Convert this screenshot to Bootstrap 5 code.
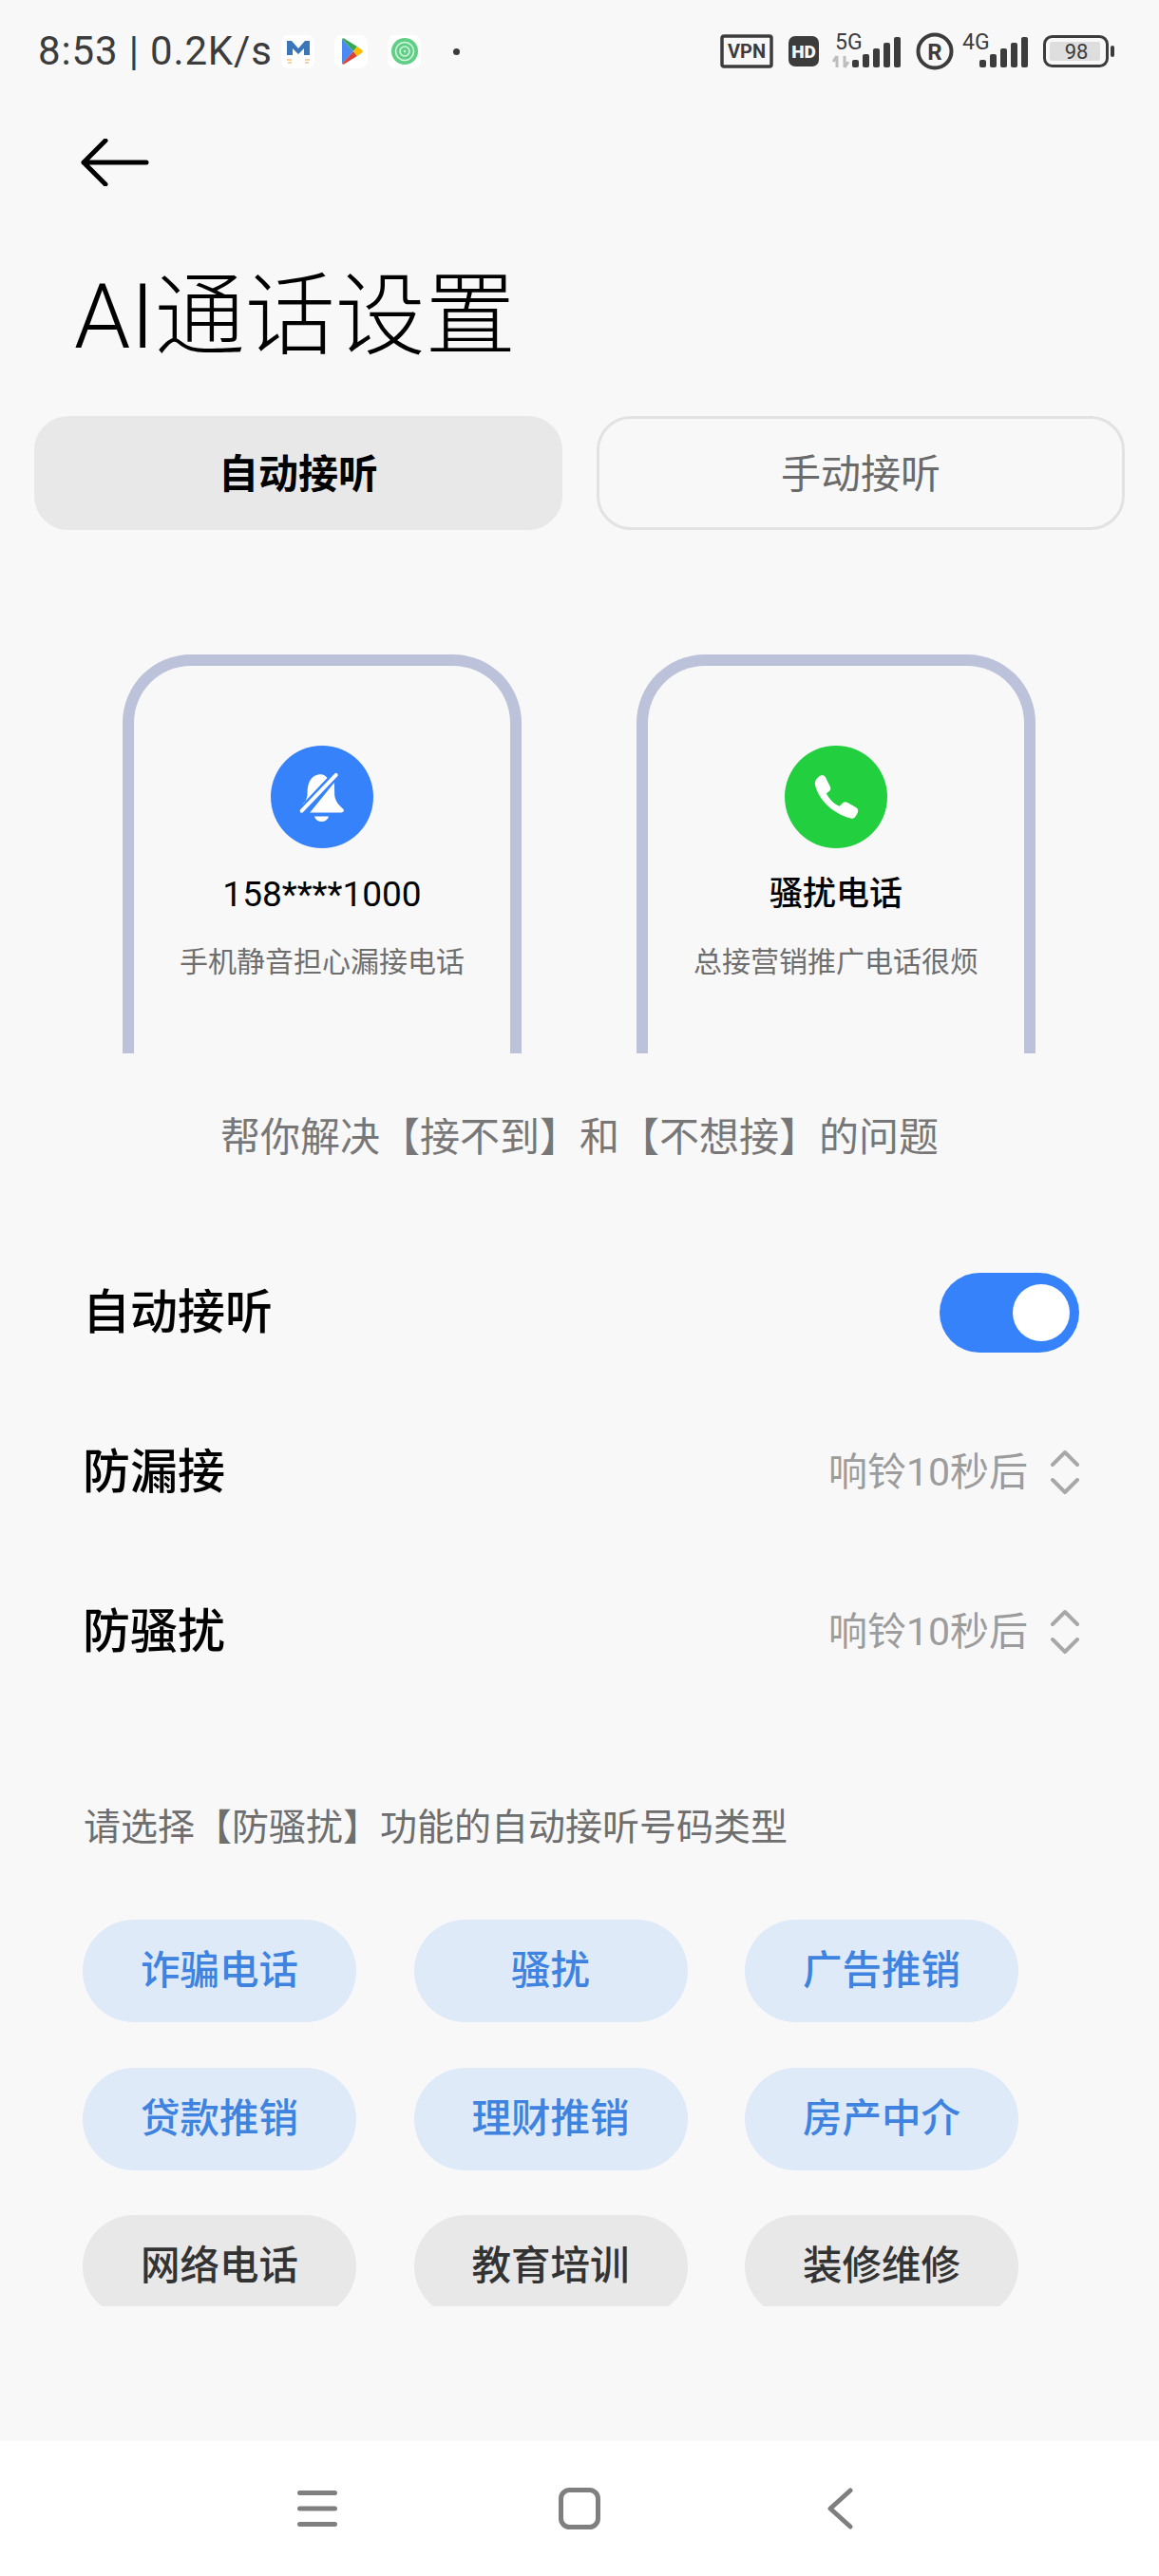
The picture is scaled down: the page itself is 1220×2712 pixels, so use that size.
<!DOCTYPE html>
<html lang="zh-CN">
<head>
  <meta charset="utf-8">
  <title>AI通话设置</title>
  <link href="https://cdn.jsdelivr.net/npm/bootstrap@5.3.0/dist/css/bootstrap.min.css" rel="stylesheet">
  <style>
    body {
      background: #f8f8f8;
      font-family: Roboto, "Noto Sans CJK SC", sans-serif;
      color: #000;
      height: 2712px;
      overflow: hidden;
    }
    .phone-screen { height: 2712px; }

    .status-row { height: 108px; padding: 0 47px 0 40px; color: #3c3c3c; }
    .status-clock { font-size: 42px; line-height: 1; width: 256px; white-space: nowrap; letter-spacing: .85px; }
    .app-tile { width: 35px; height: 35px; background: #fff; border-radius: 8px; margin-right: 21px; }
    .status-dot { width: 7px; height: 7px; border-radius: 50%; background: #3c3c3c; margin-left: 13px; }

    .back-row { padding: 38px 0 0 85px; height: 70px; }
    .page-title { font-size: 95px; font-weight: 300; line-height: 1; margin: 108px 0 0 78px; }

    .mode-tabs { margin: 57px 36px 0; gap: 36px; }
    .mode-tab {
      flex: 1 1 0; height: 120px; font-size: 42px; line-height: 1; border-radius: 36px; padding-top: 10px;
      border: 3px solid #e2e2e2; background: transparent; color: #6a6a6a;
    }
    .mode-tab.is-on { background: #e8e8e8; border-color: #e8e8e8; color: #000; font-weight: 700; }

    .phones { margin: 131px 0 0 129px; gap: 121px; }
    .phone-frame {
      width: 420px; height: 420px; border: 12px solid #bcc2da; border-bottom: 0;
      border-radius: 72px 72px 0 0; padding-top: 84px;
    }
    .call-icon { width: 108px; height: 108px; border-radius: 50%; }
    .call-name { font-size: 37px; line-height: 1; margin-top: 30px; height: 37px; }
    .call-name.is-cjk { font-size: 35px; font-weight: 500; line-height: 37px; }
    .call-hint { font-size: 30px; line-height: 1; margin-top: 38px; color: #6e6e6e; }

    .solve-note { font-size: 42px; line-height: 1; color: #777; margin-top: 68px; text-align: center; }

    .setting-rows { margin-top: 79px; padding: 0 84px 0 87px; }
    .setting-row { height: 168px; }
    .setting-label { font-size: 50px; line-height: 1; font-weight: 500; }
    .setting-value { font-size: 41px; line-height: 1; color: #9c9c9c; margin-right: 24px; }

    .form-switch .ai-switch {
      width: 147px; height: 84px; margin: 0; float: none; border: 0; border-radius: 42px;
      background-color: #3682fb; background-size: auto 80px; background-position: right 2px center;
    }
    .ai-switch:focus { box-shadow: none; }

    .type-note { font-size: 39px; line-height: 1; color: #6e6e6e; margin: 103px 0 0 88px; }
    .type-clip { height: 407px; overflow: hidden; margin: 77px 0 0 87px; }
    .type-grid { display: grid; grid-template-columns: repeat(3, 288px); column-gap: 60.5px; row-gap: 47.5px; }
    .type-chip {
      height: 108px; border-radius: 54px; font-size: 41.5px; line-height: 1; font-weight: 500;
      background: #e8e8e8; color: #333;
    }
    .type-chip.is-on { background: #deeaf8; color: #3e83e0; }

    .nav-bar { height: 142px; background: #fff; margin-top: auto; position: relative; }
    .nav-bar svg { display: block; }
  </style>
</head>
<body>
  <div class="phone-screen d-flex flex-column">

    <!-- status bar -->
    <div class="status-row d-flex align-items-center">
      <div class="status-clock">8:53 | 0.2K/s</div>
      <div class="app-tile d-flex align-items-center justify-content-center">
        <svg width="30" height="30" viewBox="0 0 30 30">
          <path d="M3 4h5l7 8 7-8h5v15h-6v-7l-6 6-6-6v7H3z" fill="#3a76b8"/>
          <path d="M3 24h5M22 24h5M4 27h4M22 27h4" stroke="#f0c48a" stroke-width="1.5"/>
        </svg>
      </div>
      <div class="app-tile d-flex align-items-center justify-content-center">
        <svg width="26" height="30" viewBox="0 0 26 30">
          <path d="M3 2l12 13L3 28z" fill="#4a8af4"/>
          <path d="M3 2c1-1 2-1 3 0l13 8-4 5z" fill="#34a853"/>
          <path d="M3 28c1 1 2 1 3 0l13-8-4-5z" fill="#d8443a"/>
          <path d="M19 10l5 3.5c1 1 1 2 0 3L19 20l-4-5z" fill="#fbbc04"/>
        </svg>
      </div>
      <div class="app-tile d-flex align-items-center justify-content-center">
        <svg width="30" height="30" viewBox="0 0 30 30">
          <circle cx="15" cy="15" r="14" fill="#5fcf86"/>
          <circle cx="15" cy="15" r="9.5" fill="none" stroke="#d7f4e0" stroke-width="1.6"/>
          <circle cx="15" cy="15" r="5" fill="none" stroke="#d7f4e0" stroke-width="1.6"/>
          <circle cx="15" cy="15" r="1.2" fill="#d7f4e0"/>
        </svg>
      </div>
      <div class="status-dot"></div>

      <div class="ms-auto d-flex align-items-center">
        <svg width="56" height="36" viewBox="0 0 56 36" class="me-3">
          <rect x="2" y="2" width="52" height="32" rx="2" fill="none" stroke="#3c3c3c" stroke-width="3.5"/>
          <text x="28" y="25" text-anchor="middle" font-family="Roboto" font-weight="700" font-size="20" fill="#3c3c3c">VPN</text>
        </svg>
        <svg width="32" height="32" viewBox="0 0 32 32" style="margin-right:14px">
          <rect width="32" height="32" rx="7" fill="#3c3c3c"/>
          <text x="16" y="23" text-anchor="middle" font-family="Roboto" font-weight="900" font-size="19" fill="#f8f8f8">HD</text>
        </svg>
        <svg width="72" height="48" viewBox="0 0 72 48" class="me-3">
          <text x="3" y="22" font-family="Roboto" font-size="23" fill="#3c3c3c">5G</text>
          <path d="M5 29v12M1 35l4-6M13 41V29M17 35l-4 6" stroke="#bdbdbd" stroke-width="3" fill="none"/>
          <rect x="21" y="33" width="7" height="8" rx="2" fill="#3c3c3c"/>
          <rect x="32" y="27" width="7" height="14" rx="2" fill="#3c3c3c"/>
          <rect x="43" y="21" width="7" height="20" rx="2" fill="#3c3c3c"/>
          <rect x="54" y="15" width="7" height="26" rx="2" fill="#3c3c3c"/>
          <rect x="65" y="9" width="7" height="32" rx="2" fill="#3c3c3c"/>
        </svg>
        <svg width="40" height="40" viewBox="0 0 40 40" style="margin-right:9px">
          <circle cx="20" cy="20" r="17.5" fill="none" stroke="#3c3c3c" stroke-width="4"/>
          <text x="20" y="28.500" text-anchor="middle" font-family="Roboto" font-weight="700" font-size="24" fill="#3c3c3c">R</text>
        </svg>
        <svg width="69" height="48" viewBox="0 0 69 48" class="me-3">
          <text x="0" y="22" font-family="Roboto" font-size="23" fill="#3c3c3c">4G</text>
          <rect x="18" y="33" width="7" height="8" rx="2" fill="#3c3c3c"/>
          <rect x="29" y="27" width="7" height="14" rx="2" fill="#3c3c3c"/>
          <rect x="40" y="21" width="7" height="20" rx="2" fill="#3c3c3c"/>
          <rect x="51" y="15" width="7" height="26" rx="2" fill="#3c3c3c"/>
          <rect x="62" y="9" width="7" height="32" rx="2" fill="#3c3c3c"/>
        </svg>
        <svg width="75" height="34" viewBox="0 0 75 34">
          <rect x="1.500" y="1.500" width="66" height="31" rx="8" fill="none" stroke="#3c3c3c" stroke-width="3"/>
          <rect x="7" y="7" width="53" height="20" rx="2" fill="#dedede"/>
          <rect x="71" y="11" width="4" height="12" rx="2" fill="#3c3c3c"/>
          <text x="35" y="25" text-anchor="middle" font-family="Roboto" font-size="22" fill="#3c3c3c">98</text>
        </svg>
      </div>
    </div>

    <!-- back + title -->
    <div class="back-row">
      <svg width="72" height="50" viewBox="0 0 72 50" class="d-block">
        <path d="M69 25H3M26 2L3 25l23 23" fill="none" stroke="#000" stroke-width="5" stroke-linecap="round" stroke-linejoin="round"/>
      </svg>
    </div>
    <h1 class="page-title">AI通话设置</h1>

    <div class="mode-tabs d-flex">
      <button type="button" class="btn mode-tab is-on">自动接听</button>
      <button type="button" class="btn mode-tab">手动接听</button>
    </div>

    <!-- two phone illustrations -->
    <div class="phones d-flex">
      <div class="phone-frame d-flex flex-column align-items-center">
        <div class="call-icon d-flex align-items-center justify-content-center" style="background:#3682fb">
          <svg width="53" height="57" viewBox="640 420 160 170">
            <path d="M715 432C682 432 672 462 672 490C672 510 664 522 655 528L735 443C729 436 722 432 715 432Z" fill="#fff"/>
            <path d="M757 458C758 470 758 480 758 492C758 515 772 530 786 542C790 548 786 553 780 553L680 553Z" fill="#fff"/>
            <path d="M694 565H740C736 576 727 582 717 582C707 582 698 576 694 565Z" fill="#fff"/>
            <path d="M654 548L763 434" stroke="#fff" stroke-width="12" stroke-linecap="round"/>
          </svg>
        </div>
        <div class="call-name">158****1000</div>
        <div class="call-hint">手机静音担心漏接电话</div>
      </div>
      <div class="phone-frame d-flex flex-column align-items-center">
        <div class="call-icon d-flex align-items-center justify-content-center" style="background:#22cf3e">
          <svg width="53" height="52" viewBox="640 430 160 155">
            <path d="M662 445C670 437 681 437 685 445L700 475C703 482 701 487 696 490L688 496C695 512 712 530 730 537L738 528C743 523 748 522 754 525L782 541C790 546 790 553 786 560L780 570C776 576 770 578 762 575C710 560 665 520 652 470C650 460 654 452 662 445Z" fill="#fff"/>
          </svg>
        </div>
        <div class="call-name is-cjk">骚扰电话</div>
        <div class="call-hint">总接营销推广电话很烦</div>
      </div>
    </div>

    <div class="solve-note">帮你解决【接不到】和【不想接】的问题</div>

    <!-- settings -->
    <div class="setting-rows">
      <div class="setting-row d-flex align-items-center justify-content-between">
        <div class="setting-label">自动接听</div>
        <div class="form-check form-switch p-0 m-0 d-flex">
          <input class="form-check-input ai-switch" type="checkbox" role="switch" checked aria-label="自动接听">
        </div>
      </div>
      <div class="setting-row d-flex align-items-center">
        <div class="setting-label me-auto">防漏接</div>
        <div class="setting-value">响铃10秒后</div>
        <svg width="30" height="48" viewBox="0 0 30 48">
          <path d="M2 16L15 3l13 13M2 32l13 13 13-13" fill="none" stroke="#a8a8a8" stroke-width="4" stroke-linecap="round" stroke-linejoin="round"/>
        </svg>
      </div>
      <div class="setting-row d-flex align-items-center">
        <div class="setting-label me-auto">防骚扰</div>
        <div class="setting-value">响铃10秒后</div>
        <svg width="30" height="48" viewBox="0 0 30 48">
          <path d="M2 16L15 3l13 13M2 32l13 13 13-13" fill="none" stroke="#a8a8a8" stroke-width="4" stroke-linecap="round" stroke-linejoin="round"/>
        </svg>
      </div>
    </div>

    <div class="type-note">请选择【防骚扰】功能的自动接听号码类型</div>

    <div class="type-clip">
      <div class="type-grid">
        <div class="type-chip is-on d-flex align-items-center justify-content-center">诈骗电话</div>
        <div class="type-chip is-on d-flex align-items-center justify-content-center">骚扰</div>
        <div class="type-chip is-on d-flex align-items-center justify-content-center">广告推销</div>
        <div class="type-chip is-on d-flex align-items-center justify-content-center">贷款推销</div>
        <div class="type-chip is-on d-flex align-items-center justify-content-center">理财推销</div>
        <div class="type-chip is-on d-flex align-items-center justify-content-center">房产中介</div>
        <div class="type-chip d-flex align-items-center justify-content-center">网络电话</div>
        <div class="type-chip d-flex align-items-center justify-content-center">教育培训</div>
        <div class="type-chip d-flex align-items-center justify-content-center">装修维修</div>
      </div>
    </div>

    <!-- android nav buttons -->
    <div class="nav-bar">
      <svg class="position-absolute" style="left:313px;top:52px" width="42" height="38" viewBox="0 0 42 38">
        <path d="M2.500 2.500h37M2.500 19h37M2.500 35.500h37" stroke="#7f7f7f" stroke-width="5" stroke-linecap="round"/>
      </svg>
      <svg class="position-absolute" style="left:588px;top:49px" width="44" height="44" viewBox="0 0 44 44">
        <rect x="2.500" y="2.500" width="39" height="39" rx="9" fill="none" stroke="#7f7f7f" stroke-width="5"/>
      </svg>
      <svg class="position-absolute" style="left:869px;top:49px" width="30" height="44" viewBox="0 0 30 44">
        <path d="M26 3L5 22l21 19" fill="none" stroke="#7f7f7f" stroke-width="5" stroke-linecap="round" stroke-linejoin="round"/>
      </svg>
    </div>
  </div>

  <script src="https://cdn.jsdelivr.net/npm/bootstrap@5.3.0/dist/js/bootstrap.bundle.min.js"></script>
</body>
</html>
